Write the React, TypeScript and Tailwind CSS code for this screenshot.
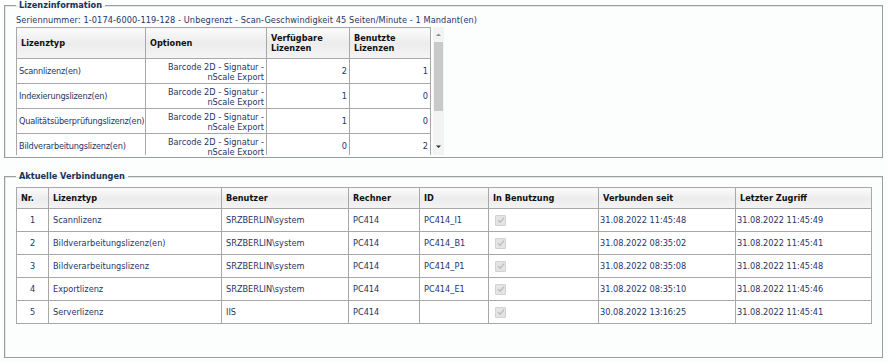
import React from "react";

const lizenzen = [
  { typ: "Scannlizenz(en)", verf: 2, ben: 1 },
  { typ: "Indexierungslizenz(en)", verf: 1, ben: 0 },
  { typ: "Qualitätsüberprüfungslizenz(en)", verf: 1, ben: 0 },
  { typ: "Bildverarbeitungslizenz(en)", verf: 0, ben: 2 },
];

const verbindungen = [
  { nr: 1, typ: "Scannlizenz", user: "SRZBERLIN\\system", pc: "PC414", id: "PC414_I1", seit: "31.08.2022 11:45:48", last: "31.08.2022 11:45:49" },
  { nr: 2, typ: "Bildverarbeitungslizenz(en)", user: "SRZBERLIN\\system", pc: "PC414", id: "PC414_B1", seit: "31.08.2022 08:35:02", last: "31.08.2022 11:45:41" },
  { nr: 3, typ: "Bildverarbeitungslizenz", user: "SRZBERLIN\\system", pc: "PC414", id: "PC414_P1", seit: "31.08.2022 08:35:08", last: "31.08.2022 11:45:48" },
  { nr: 4, typ: "Exportlizenz", user: "SRZBERLIN\\system", pc: "PC414", id: "PC414_E1", seit: "31.08.2022 08:35:10", last: "31.08.2022 11:45:46" },
  { nr: 5, typ: "Serverlizenz", user: "IIS", pc: "PC414", id: "", seit: "30.08.2022 13:16:25", last: "31.08.2022 11:45:41" },
];

const th = "border border-[#a8a8a8] bg-linear-to-b from-[#fbfbfb] via-[#ececec] to-[#f4f4f4] text-left align-middle font-bold text-[#111] px-[4px]";
const td = "border border-[#a8a8a8] px-[4px] align-middle";

function DisabledCheck() {
  return (
    <span className="inline-flex w-[11px] h-[11px] items-center justify-center bg-[#e4e4e4] border border-[#d2d2d2] rounded-[1px]">
      <svg width="8" height="8" viewBox="0 0 8 8">
        <path d="M1 4.2 L3.2 6.2 L7 1.6" fill="none" stroke="#bcbcbc" strokeWidth="1.4" />
      </svg>
    </span>
  );
}

export default function App() {
  return (
    <div className="w-[888px] h-[363px] bg-[#fcfefe] overflow-hidden text-[8.2px] text-[#1f3566]" style={{ fontFamily: "'DejaVu Sans', Verdana, sans-serif" }}>
      {/* Lizenzinformation */}
      <fieldset className="ml-[4px] w-[879px] h-[158px] border border-[#9c9c9c] shadow-[inset_1px_1px_0_#e6e6e6] pl-[11px]">
        <legend className="px-[3px] leading-[10px] font-bold text-[#17325f]">Lizenzinformation</legend>
        <div className="mt-[5px] mb-[2px] leading-[10px] whitespace-nowrap tracking-[0.1px]">
          Seriennummer: 1-0174-6000-119-128 - Unbegrenzt - Scan-Geschwindigkeit 45 Seiten/Minute - 1 Mandant(en)
        </div>
        <div className="flex gap-[2px]">
          <div className="h-[128px] overflow-hidden">
            <table className="table-fixed border-collapse w-[414px] bg-white">
              <colgroup>
                <col className="w-[129px]" />
                <col className="w-[121px]" />
                <col className="w-[83px]" />
                <col className="w-[81px]" />
              </colgroup>
              <thead>
                <tr className="h-[31px]">
                  <th className={th}>Lizenztyp</th>
                  <th className={th}>Optionen</th>
                  <th className={`${th} leading-[10px]`}>Verfügbare<br />Lizenzen</th>
                  <th className={`${th} leading-[10px]`}>Benutzte<br />Lizenzen</th>
                </tr>
              </thead>
              <tbody>
                {lizenzen.map((l) => (
                  <tr key={l.typ} className="h-[25px]">
                    <td className={`${td} whitespace-nowrap pl-[2px] tracking-[-0.22px]`}>{l.typ}</td>
                    <td className={`${td} text-right leading-[10px] pt-[2px] pr-[2px]`}>Barcode 2D - Signatur -<br />nScale Export</td>
                    <td className={`${td} text-right pr-[2px]`}>{l.verf}</td>
                    <td className={`${td} text-right pr-[2px]`}>{l.ben}</td>
                  </tr>
                ))}
              </tbody>
            </table>
          </div>
          <div className="w-[11px] h-[128px] bg-[#f3f3f3] flex flex-col items-center">
            <svg width="7" height="12" viewBox="0 0 7 12" className="mt-[2px]">
              <path d="M1 7 L3.5 4.5 L6 7 Z" fill="#8a8a8a" />
            </svg>
            <div className="w-[9px] h-[69px] bg-[#c9c9c9] mt-[1px]" />
            <div className="flex-1" />
            <svg width="7" height="12" viewBox="0 0 7 12" className="mb-[2px]">
              <path d="M1 4.5 L3.5 7 L6 4.5 Z" fill="#2a2a2a" />
            </svg>
          </div>
        </div>
      </fieldset>

      {/* Aktuelle Verbindungen */}
      <fieldset className="ml-[4px] mt-[13px] w-[879px] h-[187px] border border-[#9c9c9c] shadow-[inset_1px_1px_0_#e6e6e6] pl-[11px]">
        <legend className="px-[3px] leading-[10px] font-bold text-[#17325f]">Aktuelle Verbindungen</legend>
        <table className="mt-[6px] table-fixed border-collapse w-[855px] bg-white">
          <colgroup>
            <col className="w-[32px]" />
            <col className="w-[173px]" />
            <col className="w-[127px]" />
            <col className="w-[71px]" />
            <col className="w-[69px]" />
            <col className="w-[110px]" />
            <col className="w-[137px]" />
            <col className="w-[136px]" />
          </colgroup>
          <thead>
            <tr className="h-[21px]">
              <th className={`${th} text-center`}>Nr.</th>
              <th className={th}>Lizenztyp</th>
              <th className={th}>Benutzer</th>
              <th className={th}>Rechner</th>
              <th className={th}>ID</th>
              <th className={th}>In Benutzung</th>
              <th className={th}>Verbunden seit</th>
              <th className={th}>Letzter Zugriff</th>
            </tr>
          </thead>
          <tbody>
            {verbindungen.map((v) => (
              <tr key={v.nr} className="h-[23px]">
                <td className={`${td} text-center`}>{v.nr}</td>
                <td className={td}>{v.typ}</td>
                <td className={td}>{v.user}</td>
                <td className={td}>{v.pc}</td>
                <td className={td}>{v.id}</td>
                <td className={`${td} pl-[6px] leading-none`}><DisabledCheck /></td>
                <td className={`${td} pl-[1px]`}>{v.seit}</td>
                <td className={`${td} pl-[1px]`}>{v.last}</td>
              </tr>
            ))}
          </tbody>
        </table>
      </fieldset>
    </div>
  );
}
